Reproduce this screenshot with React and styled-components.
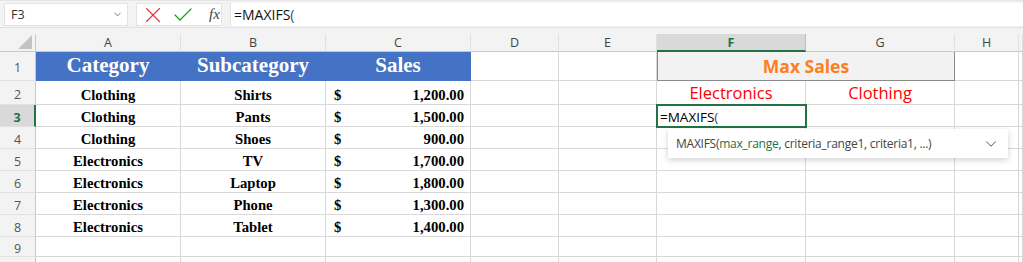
import React from 'react';
import styled, { createGlobalStyle } from 'styled-components';
import { X, Check, ChevronDown } from 'lucide-react';

const GlobalStyle = createGlobalStyle`
  html, body {
    margin: 0;
    background: #f3f3f3;
    font-family: 'Open Sans', 'Noto Sans', sans-serif;
  }
`;

const green = '#217346';
const grid = '#d8d8d8';

const columns = ['A', 'B', 'C', 'D', 'E', 'F', 'G', 'H', ''];
const colWidths = [36, 145, 145, 145, 88, 98, 149, 149, 64, 4];
const rowHeights = [29, 24, 22, 22, 22, 22, 22, 22, 20, 20];

const sales = [
  ['Clothing', 'Shirts', '1,200.00'],
  ['Clothing', 'Pants', '1,500.00'],
  ['Clothing', 'Shoes', '900.00'],
  ['Electronics', 'TV', '1,700.00'],
  ['Electronics', 'Laptop', '1,800.00'],
  ['Electronics', 'Phone', '1,300.00'],
  ['Electronics', 'Tablet', '1,400.00'],
];

const App = () => {
  return (
    <Page>
      <GlobalStyle />
      <FormulaBar>
        <NameBox>
          <span>F3</span>
          <ChevronDown size={11} strokeWidth={1.5} color="#444" />
        </NameBox>
        <Actions>
          <X size={26} strokeWidth={1.1} color="#e0393e" />
          <Check size={24} strokeWidth={1.2} color="#13a10e" />
          <Fx>fx</Fx>
        </Actions>
        <FormulaInput>
          =MAXIFS<Paren>(</Paren>
        </FormulaInput>
      </FormulaBar>

      <Sheet>
        <Corner>
          <svg width="16" height="16" viewBox="0 0 16 16">
            <polygon points="15,1 15,15 1,15" fill="#c4c4c4" />
          </svg>
        </Corner>
        {columns.map((c, i) => (
          <ColHeader key={'c' + i} $selected={c === 'F'}>
            {c}
          </ColHeader>
        ))}

        {/* row 1 */}
        <RowHeader>1</RowHeader>
        <HeadCell>Category</HeadCell>
        <HeadCell>Subcategory</HeadCell>
        <HeadCell>Sales</HeadCell>
        <Cell />
        <Cell />
        <TitleCell>Max Sales</TitleCell>
        <Cell />
        <Cell />

        {rowHeights.slice(1).map((h, r) => {
          const n = r + 2;
          const d = sales[r];
          return (
            <React.Fragment key={'r' + n}>
              {/* row 10 only peeks in at the bottom edge */}
              <RowHeader $selected={n === 3}>{n < 10 ? n : ''}</RowHeader>
              <DataCell>{d && d[0]}</DataCell>
              <DataCell>{d && d[1]}</DataCell>
              {d ? (
                <MoneyCell>
                  <span>$</span>
                  <span>{d[2]}</span>
                </MoneyCell>
              ) : (
                <Cell />
              )}
              <Cell />
              <Cell />
              {n === 2 ? (
                <>
                  <LabelCell>Electronics</LabelCell>
                  <LabelCell>Clothing</LabelCell>
                </>
              ) : n === 3 ? (
                <>
                  <ActiveCell>
                    =MAXIFS<Paren>(</Paren>
                  </ActiveCell>
                  <Cell />
                </>
              ) : (
                <>
                  <Cell />
                  <Cell />
                </>
              )}
              <Cell />
              <Cell />
            </React.Fragment>
          );
        })}

        <Tooltip>
          <span>
            MAXIFS(<Arg>max_range</Arg>, criteria_range1, criteria1, ...)
          </span>
          <ChevronDown size={18} strokeWidth={1.2} color="#444" />
        </Tooltip>
      </Sheet>
    </Page>
  );
};

const Page = styled.div`
  width: 1023px;
  height: 262px;
  overflow: hidden;
  background: #f3f3f3;
`;

const FormulaBar = styled.div`
  display: flex;
  align-items: stretch;
  gap: 8px;
  height: 23px;
  padding: 2px 0 1px 4px;
  border-top: 1px solid #e6e6e6;
  border-bottom: 1px solid #e1e1e1;
`;

const NameBox = styled.div`
  width: 112px;
  display: flex;
  align-items: center;
  justify-content: space-between;
  padding: 0 4px 0 6px;
  background: #fff;
  border: 1px solid #e3e3e3;
  font-size: 12.5px;
  color: #333;
`;

const Actions = styled.div`
  width: 86px;
  display: flex;
  align-items: center;
  gap: 5px;
  padding-left: 3px;
  box-sizing: border-box;
  background: #fff;
  border: 1px solid #e3e3e3;
`;

const Fx = styled.span`
  margin-left: 9px;
  font-family: 'Liberation Serif', serif;
  font-style: italic;
  font-size: 15px;
  color: #444;
`;

const FormulaInput = styled.div`
  flex: 1;
  display: flex;
  align-items: center;
  padding-left: 3px;
  background: #fff;
  border-left: 1px solid #e3e3e3;
  font-size: 14px;
  color: #111;
`;

const Paren = styled.span`
  color: #1f4e9b;
`;

const Sheet = styled.div`
  position: relative;
  margin-top: 6px;
  display: grid;
  grid-template-columns: ${colWidths.map((w) => w + 'px').join(' ')};
  grid-template-rows: 18px ${rowHeights.map((h) => h + 'px').join(' ')};
  background: #fff;
`;

const Corner = styled.div`
  background: #f3f3f3;
  display: flex;
  align-items: flex-end;
  justify-content: flex-end;
  padding: 0 2px 1px 0;
  border-right: 1px solid #c8c8c8;
  border-bottom: 1px solid #c8c8c8;
`;

const ColHeader = styled.div`
  display: flex;
  align-items: center;
  justify-content: center;
  background: ${(p) => (p.$selected ? '#d9d9d9' : '#f3f3f3')};
  color: ${(p) => (p.$selected ? green : '#444')};
  font-weight: ${(p) => (p.$selected ? 700 : 400)};
  font-size: 12.5px;
  border-right: 1px solid ${(p) => (p.$selected ? '#bdbdbd' : '#e1e1e1')};
  border-bottom: ${(p) => (p.$selected ? `2px solid ${green}` : '1px solid #c8c8c8')};
`;

const RowHeader = styled.div`
  display: flex;
  align-items: center;
  justify-content: center;
  padding-top: 3px;
  background: ${(p) => (p.$selected ? '#d9d9d9' : '#f3f3f3')};
  color: ${(p) => (p.$selected ? green : '#555')};
  font-weight: ${(p) => (p.$selected ? 700 : 400)};
  font-size: 12.5px;
  border-right: ${(p) => (p.$selected ? `2px solid ${green}` : '1px solid #c8c8c8')};
  border-bottom: 1px solid #e1e1e1;
`;

const Cell = styled.div`
  display: flex;
  align-items: center;
  border-right: 1px solid ${grid};
  border-bottom: 1px solid ${grid};
  min-width: 0;
  white-space: nowrap;
`;

const HeadCell = styled(Cell)`
  justify-content: center;
  background: #4472c4;
  border-color: #4472c4;
  color: #fff;
  font-family: 'Liberation Serif', serif;
  font-weight: 700;
  font-size: 21px;
  padding-bottom: 1px;
`;

const DataCell = styled(Cell)`
  align-items: flex-end;
  justify-content: center;
  font-family: 'Liberation Serif', serif;
  font-weight: 700;
  font-size: 14.7px;
  color: #000;
`;

const MoneyCell = styled(DataCell)`
  justify-content: space-between;
  padding: 0 6px 0 8px;
`;

const TitleCell = styled(Cell)`
  grid-column: span 2;
  justify-content: center;
  background: #f2f2f2;
  border: 1px solid #8a8a8a;
  border-top: none;
  color: #ff7f1e;
  font-weight: 700;
  font-size: 17.5px;
`;

const LabelCell = styled(Cell)`
  align-items: flex-end;
  justify-content: center;
  color: #ff0000;
  font-size: 16.5px;
`;

const ActiveCell = styled(Cell)`
  position: relative;
  z-index: 1;
  padding-left: 3px;
  padding-top: 2px;
  font-size: 13.5px;
  color: #000;
  outline: 2px solid ${green};
  outline-offset: -1px;
`;

const Tooltip = styled.div`
  position: absolute;
  left: 668px;
  top: 95px;
  width: 340px;
  height: 29px;
  box-sizing: border-box;
  z-index: 2;
  display: flex;
  align-items: center;
  justify-content: space-between;
  padding: 0 8px 0 8px;
  background: #fff;
  box-shadow: 0 2px 6px rgba(0, 0, 0, 0.18);
  font-size: 12px;
  letter-spacing: -0.25px;
  color: #444;
`;

const Arg = styled.span`
  color: ${green};
`;

export default App;
